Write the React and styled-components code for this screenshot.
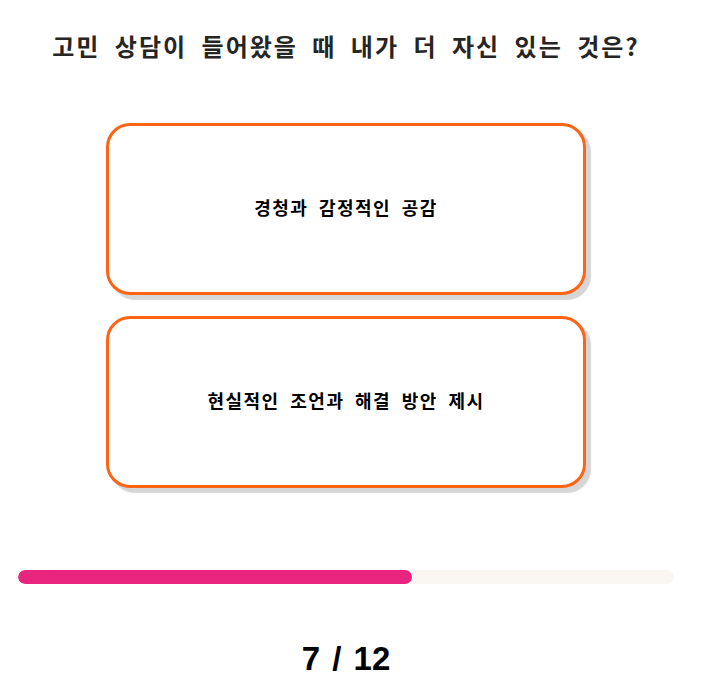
import React from "react";
import styled, { createGlobalStyle } from "styled-components";

const GlobalStyle = createGlobalStyle`
  body {
    margin: 0;
    background: #fff;
    font-family: "Noto Sans CJK KR", "Noto Sans", sans-serif;
  }
`;

const Page = styled.div`
  width: 692px;
  box-sizing: border-box;
  padding: 28px 18px 0;
  display: flex;
  flex-direction: column;
  align-items: center;
`;

const Question = styled.h1`
  margin: 0;
  font-size: 24px;
  line-height: 36px;
  font-weight: 700;
  letter-spacing: 2px;
  word-spacing: 7px;
  color: #252525;
  text-align: center;
  white-space: nowrap;
`;

const Choices = styled.div`
  margin-top: 59px;
  display: flex;
  flex-direction: column;
  gap: 21px;
`;

const Choice = styled.button`
  width: 480px;
  height: 172px;
  box-sizing: border-box;
  padding: 0 0 5px;
  border: 3px solid #ff6314;
  border-radius: 24px;
  background: #fff;
  box-shadow: 5px 5px 1px #d6d6d6;
  font-family: inherit;
  font-size: 18px;
  font-weight: 700;
  letter-spacing: 1.5px;
  word-spacing: 5px;
  color: #000;
  cursor: pointer;
`;

const Track = styled.div`
  margin-top: 82px;
  width: 100%;
  height: 14px;
  border-radius: 7px;
  background: #faf6f2;
  overflow: hidden;
`;

const Fill = styled.div`
  height: 100%;
  border-radius: 7px;
  background: #e8247f;
`;

const Counter = styled.div`
  margin-top: 56px;
  font-family: "Liberation Sans", Arial, sans-serif;
  font-size: 33px;
  font-weight: 700;
  word-spacing: 3px;
  color: #000;
`;

const choices = ["경청과 감정적인 공감", "현실적인 조언과 해결 방안 제시"];

export default function App() {
  const current = 7;
  const total = 12;
  return (
    <>
      <GlobalStyle />
      <Page>
        <Question>고민 상담이 들어왔을 때 내가 더 자신 있는 것은?</Question>
        <Choices>
          {choices.map((c) => (
            <Choice key={c}>{c}</Choice>
          ))}
        </Choices>
        <Track>
          <Fill style={{ width: "60%" }} />
        </Track>
        <Counter>
          {current} / {total}
        </Counter>
      </Page>
    </>
  );
}
